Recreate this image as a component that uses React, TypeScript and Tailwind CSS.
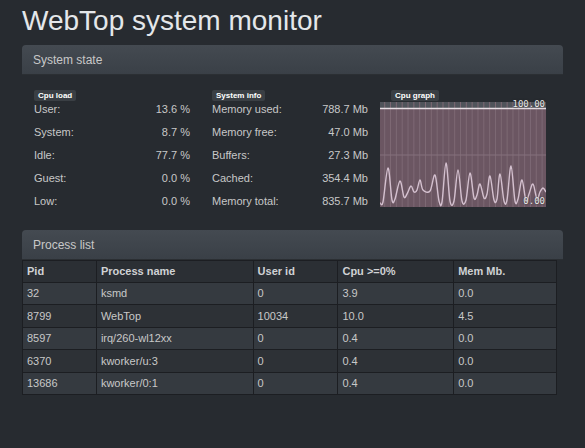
import React from "react";

const cpuLoad = [
  ["User:", "13.6 %"],
  ["System:", "8.7 %"],
  ["Idle:", "77.7 %"],
  ["Guest:", "0.0 %"],
  ["Low:", "0.0 %"],
];

const sysInfo = [
  ["Memory used:", "788.7 Mb"],
  ["Memory free:", "47.0 Mb"],
  ["Buffers:", "27.3 Mb"],
  ["Cached:", "354.4 Mb"],
  ["Memory total:", "835.7 Mb"],
];

const processes = [
  ["32", "ksmd", "0", "3.9", "0.0"],
  ["8799", "WebTop", "10034", "10.0", "4.5"],
  ["8597", "irq/260-wl12xx", "0", "0.4", "0.0"],
  ["6370", "kworker/u:3", "0", "0.4", "0.0"],
  ["13686", "kworker/0:1", "0", "0.4", "0.0"],
];

// cpu samples, x/y in graph px
const samples: [number, number][] = [
  [0, 101], [3, 100], [8, 66], [12, 98], [15, 97], [20, 79], [24, 95], [27, 92], [31, 84],
  [34, 90], [37, 88], [40, 78], [43, 88], [50, 89], [55, 73], [59, 99], [62, 100], [66, 61],
  [70, 99], [74, 99], [78, 68], [82, 99], [86, 98], [90, 71], [94, 96], [97, 93], [100, 82],
  [104, 96], [107, 92], [110, 74], [114, 98], [117, 97], [120, 72], [124, 99], [127, 98],
  [131, 64], [135, 99], [138, 97], [142, 78], [146, 99], [149, 92], [153, 82], [157, 97],
  [160, 90], [163, 86], [166, 90],
];

function smoothPath(pts: [number, number][]) {
  let d = `M${pts[0][0]},${pts[0][1]}`;
  for (let i = 0; i < pts.length - 1; i++) {
    const p0 = pts[i - 1] || pts[i];
    const p1 = pts[i];
    const p2 = pts[i + 1];
    const p3 = pts[i + 2] || p2;
    const c1x = p1[0] + (p2[0] - p0[0]) / 6;
    const c1y = p1[1] + (p2[1] - p0[1]) / 6;
    const c2x = p2[0] - (p3[0] - p1[0]) / 6;
    const c2y = p2[1] - (p3[1] - p1[1]) / 6;
    d += ` C${c1x.toFixed(1)},${c1y.toFixed(1)} ${c2x.toFixed(1)},${c2y.toFixed(1)} ${p2[0]},${p2[1]}`;
  }
  return d;
}

function Tag({ children }: { children: React.ReactNode }) {
  return (
    <div className="flex h-[11px] w-fit items-center rounded-[2px] bg-[#3a3f44] px-[4px] text-[8px] font-bold leading-none text-white">
      {children}
    </div>
  );
}

function StatList({ title, rows }: { title: string; rows: string[][] }) {
  return (
    <div className="w-[156px]">
      <Tag>{title}</Tag>
      <div className="-mt-[3px]">
        {rows.map(([k, v]) => (
          <div key={k} className="flex h-[23px] items-center justify-between text-[11px] text-[#c8c8c8]">
            <span>{k}</span>
            <span>{v}</span>
          </div>
        ))}
      </div>
    </div>
  );
}

function CpuGraph() {
  const lines = Array.from({ length: 28 }, (_, i) => 4.7 + i * 5.83);
  return (
    <div className="w-[166px]">
      <div className="pl-[11px]">
        <Tag>Cpu graph</Tag>
      </div>
      <div className="relative mt-[1px] h-[105px] w-[166px]">
        <svg width="166" height="105" viewBox="0 0 166 105" className="block">
          <rect x="0" y="0" width="166" height="6" fill="#50545b" />
          <rect x="0" y="6" width="166" height="99" fill="#6b5662" />
          {lines.map((x) => (
            <line key={x} x1={x} y1="0" x2={x} y2="105" stroke="#7d6974" strokeWidth="1" />
          ))}
          <line x1="0" y1="53" x2="166" y2="53" stroke="#85717c" strokeWidth="1" />
          <line x1="0" y1="6.5" x2="166" y2="6.5" stroke="#e6dde3" strokeWidth="1.5" />
          <path d={smoothPath(samples)} fill="none" stroke="#d4c0cf" strokeWidth="1.4" />
        </svg>
        <span className="absolute right-[1px] top-[-2px] font-['DejaVu_Sans_Mono',monospace] text-[9px] leading-none text-[#e8e8e8] [text-shadow:0_0_2px_#222]">
          100.00
        </span>
        <span className="absolute bottom-[1px] right-[1px] font-['DejaVu_Sans_Mono',monospace] text-[9px] leading-none text-[#e8e8e8] [text-shadow:0_0_2px_#222]">
          0.00
        </span>
      </div>
    </div>
  );
}

function PanelHeading({ children }: { children: React.ReactNode }) {
  return (
    <div className="flex h-[30px] items-center rounded-t-[4px] border-b border-[#2b2f33] bg-gradient-to-b from-[#444a51] to-[#3a4047] px-[11px] text-[12px] text-[#c8c8c8]">
      {children}
    </div>
  );
}

export default function App() {
  const cols = ["w-[74px]", "w-[157px]", "w-[85px]", "w-[116px]", "w-[103px]"];
  return (
    <div className="min-h-[448px] w-[585px] bg-[#272b30] px-[22px] pt-[4px] font-['Liberation_Sans',Arial,sans-serif]">
      <h1 className="text-[28px] leading-[34px] text-[#e4e7ea]">WebTop system monitor</h1>

      <div className="mt-[7px] rounded-[4px]">
        <PanelHeading>System state</PanelHeading>
        <div className="flex px-[12px] pb-[12px] pt-[15px]">
          <StatList title="Cpu load" rows={cpuLoad} />
          <div className="ml-[22px]">
            <StatList title="System info" rows={sysInfo} />
          </div>
          <div className="ml-[12px]">
            <CpuGraph />
          </div>
        </div>
      </div>

      <div className="mt-[5px]">
        <PanelHeading>Process list</PanelHeading>
        <table className="w-[535px] border-collapse text-[11px] text-[#c8c8c8]">
          <thead>
            <tr className="h-[22px] bg-[#2b2f34]">
              {["Pid", "Process name", "User id", "Cpu >=0%", "Mem Mb."].map((h, i) => (
                <th key={h} className={`${cols[i]} border border-[#1c1e22] px-[4px] text-left font-bold text-[#d0d2d4]`}>
                  {h}
                </th>
              ))}
            </tr>
          </thead>
          <tbody>
            {processes.map((row, r) => (
              <tr key={row[0]} className={`h-[22.4px] ${r % 2 === 0 ? "bg-[#353a40]" : "bg-[#2d3136]"}`}>
                {row.map((c, i) => (
                  <td key={i} className="border border-[#1c1e22] px-[4px]">
                    {c}
                  </td>
                ))}
              </tr>
            ))}
          </tbody>
        </table>
      </div>
    </div>
  );
}
